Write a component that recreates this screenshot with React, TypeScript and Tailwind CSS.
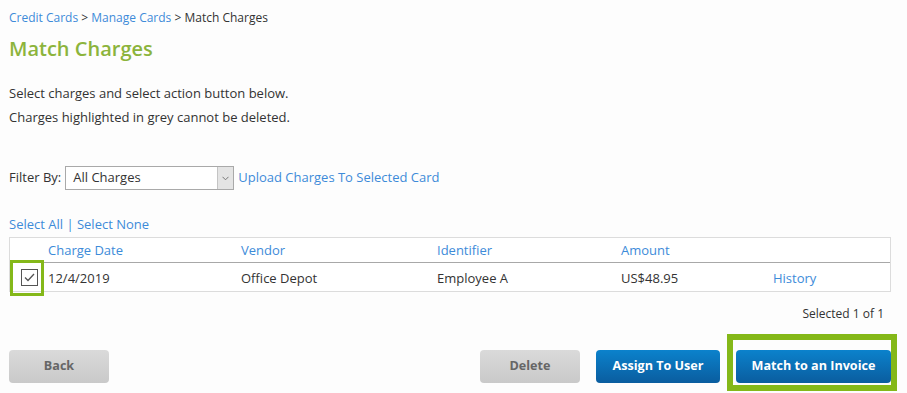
import React from "react";

const link = "text-[#3d8bd9]";

function Check() {
  return (
    <span className="flex h-[17px] w-[17px] items-center justify-center border border-[#555] bg-white">
      <svg width="11" height="9" viewBox="0 0 11 9" fill="none">
        <path d="M1 4.5 L4 7.5 L10 1" stroke="#555" strokeWidth="1.3" />
      </svg>
    </span>
  );
}

export default function App() {
  return (
    <div
      className="min-h-[393px] w-full bg-[#fdfdfd] pl-[9px] text-[#333]"
      style={{ fontFamily: '"Open Sans", "Liberation Sans", sans-serif' }}
    >
      <div className="pt-[10px] text-[12px] leading-[16px]">
        <span className={link}>Credit Cards</span>
        <span> &gt; </span>
        <span className={link}>Manage Cards</span>
        <span> &gt; Match Charges</span>
      </div>
      <h1 className="mt-[9px] text-[20px] font-semibold leading-[28px] text-[#8cb43c]">Match Charges</h1>
      <div className="mt-[18px] text-[13px] leading-[24px]">
        <div>Select charges and select action button below.</div>
        <div>Charges highlighted in grey cannot be deleted.</div>
      </div>
      <div className="mt-[37px] flex h-[24px] items-center text-[13px]">
        <span>Filter By:</span>
        <div className="ml-[4px] flex h-[24px] w-[169px] items-stretch border border-[#a9a9a9] bg-white">
          <span className="flex flex-1 items-center pl-[7px]">All Charges</span>
          <span className="flex w-[16px] items-center justify-center border-l border-[#c4c4c4] bg-[#e4e4e4]">
            <svg width="7" height="5" viewBox="0 0 7 5" fill="none">
              <path d="M0.5 0.8 L3.5 3.8 L6.5 0.8" stroke="#777" strokeWidth="1" />
            </svg>
          </span>
        </div>
        <span className={`ml-[4px] ${link}`}>Upload Charges To Selected Card</span>
      </div>
      <div className="mt-[25px] text-[13px] leading-[18px]">
        <span className={link}>Select All</span>
        <span className="text-[#3d8bd9]"> | </span>
        <span className={link}>Select None</span>
      </div>
      <div className="relative mt-[4px] w-[882px] border border-[#dcdcdc] bg-white text-[13px]">
        <div className="grid h-[25px] grid-cols-[38px_193px_196px_184px_152px_1fr] items-center border-b border-[#a8a8a8] pt-[1px]">
          <span />
          <span className={link}>Charge Date</span>
          <span className={link}>Vendor</span>
          <span className={link}>Identifier</span>
          <span className={link}>Amount</span>
          <span />
        </div>
        <div className="grid h-[28px] grid-cols-[38px_193px_196px_184px_152px_1fr] items-center pt-[3px]">
          <span className="-mt-[2px] flex justify-center pl-[1px]">
            <Check />
          </span>
          <span>12/4/2019</span>
          <span>Office Depot</span>
          <span>Employee A</span>
          <span>US$48.95</span>
          <span className={link}>History</span>
        </div>
        <div className="pointer-events-none absolute left-[0px] top-[22px] h-[36px] w-[34px] border-[3px] border-[#84b819]" />
      </div>
      <div className="mt-[13px] w-[875px] text-right text-[12px] leading-[18px]">Selected 1 of 1</div>
      <div className="mt-[27px] flex w-[882px] items-center text-[12.6px] font-bold">
        <button className="h-[33px] w-[100px] rounded-[4px] bg-gradient-to-b from-[#dadada] to-[#c9c9c9] text-[#666]">Back</button>
        <div className="flex-1" />
        <button className="h-[33px] w-[100px] rounded-[4px] bg-gradient-to-b from-[#dadada] to-[#c9c9c9] text-[#666]">Delete</button>
        <button className="ml-[16px] h-[33px] w-[124px] rounded-[4px] bg-gradient-to-b from-[#0b82cc] to-[#0a5d9f] text-white">Assign To User</button>
        <div className="relative ml-[16px]">
          <div className="pointer-events-none absolute left-[-9px] top-[-16px] h-[57px] w-[170px] border-[6px] border-[#84b819]" />
          <button className="relative h-[33px] w-[155px] rounded-[4px] bg-gradient-to-b from-[#0b82cc] to-[#0a5d9f] text-white">Match to an Invoice</button>
        </div>
      </div>
    </div>
  );
}
